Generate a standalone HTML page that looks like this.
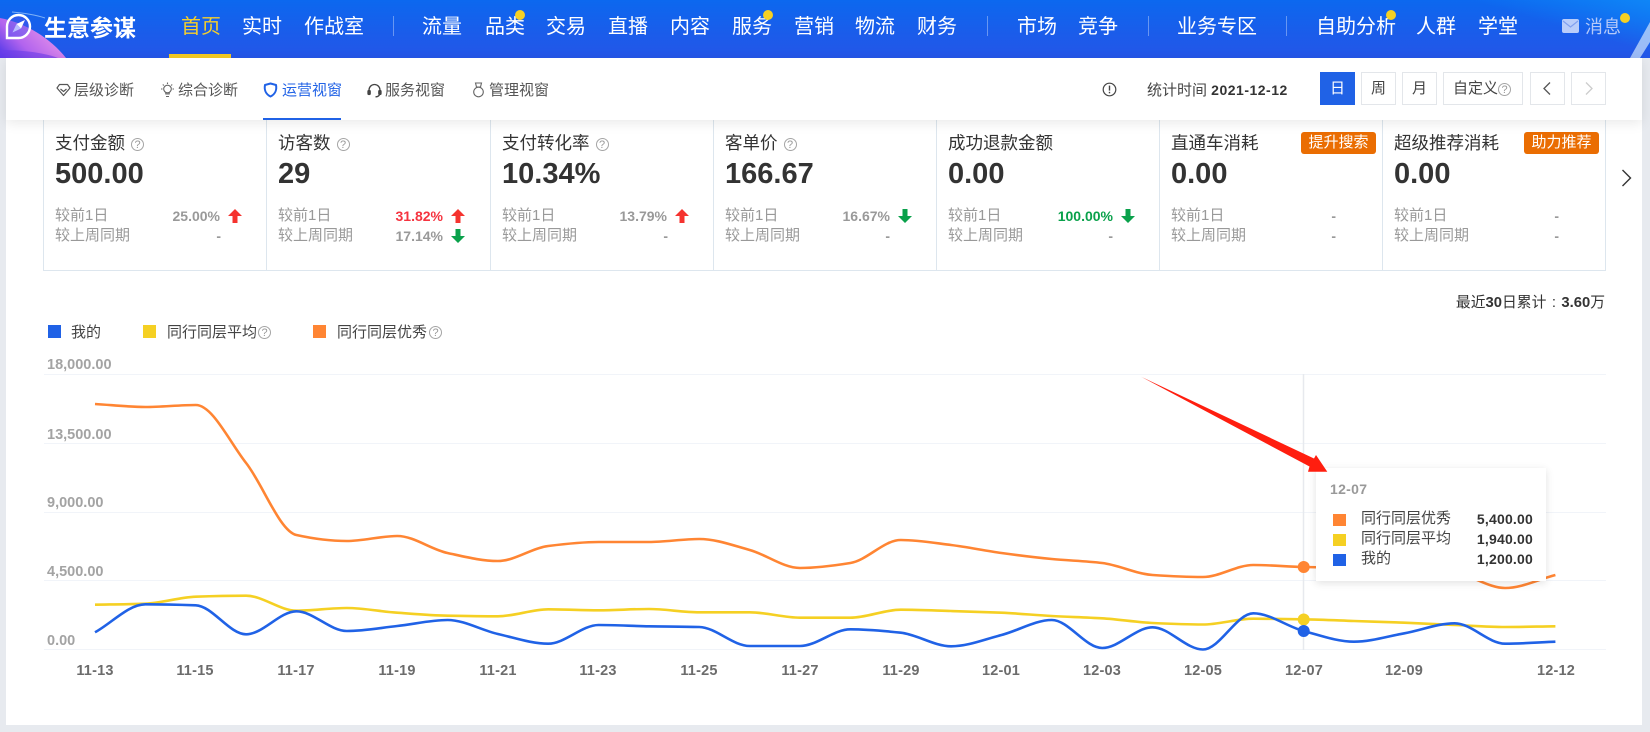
<!DOCTYPE html>
<html lang="zh">
<head>
<meta charset="utf-8">
<title>生意参谋</title>
<style>
*{box-sizing:border-box;margin:0;padding:0}
html,body{width:1650px;height:732px;overflow:hidden;background:#e7eaef}
body{position:relative;font-family:"Liberation Sans","Noto Sans CJK SC",sans-serif;color:#333}
.abs,.n,.s,.card,.btn,.dot,.sep{position:absolute}
#head{position:absolute;left:0;top:0;width:1650px;height:58px;background:linear-gradient(180deg,#0c68ef 0%,#1b5cea 60%,#2456e8 100%);overflow:hidden}
.n{top:0;line-height:54px;font-size:20px;color:#fff;white-space:nowrap}
.sep{top:16px;width:1px;height:20px;background:rgba(255,255,255,.35)}
.dot{width:10px;height:10px;border-radius:50%;background:#f5d023}
#main{position:absolute;left:6px;top:58px;width:1636px;height:667px;background:#fff}
#sub{position:absolute;left:6px;top:58px;width:1636px;height:62px;background:#fff;box-shadow:0 3px 12px rgba(0,0,0,.09);z-index:3}
.s{top:79px;line-height:24px;font-size:15px;color:#555;white-space:nowrap;z-index:4}
.ic{position:absolute;z-index:4}
.btn{top:72px;height:33px;border:1px solid #e3e6ea;background:#fff;font-size:15px;line-height:32px;text-align:center;color:#444;z-index:4}
.card{top:120px;width:224px;height:151px;border:1px solid #dde6ee;border-top:0}
.t{position:absolute;left:11px;top:11px;line-height:24px;font-size:17.5px;color:#333;white-space:nowrap}
.q{display:inline-block;width:13px;height:13px;border:1px solid #a5a5a5;border-radius:50%;font-size:11px;line-height:12px;text-align:center;color:#999;vertical-align:1px}
.t .q{margin-left:6px}
.v{position:absolute;left:11px;top:39px;line-height:30px;font-size:29px;font-weight:bold;color:#333}
.l{position:absolute;left:11px;line-height:20px;font-size:15px;color:#999;white-space:nowrap}
.r1{top:86px}.r2{top:106px}
.p{position:absolute;left:0;width:176px;text-align:right;line-height:20px;font-size:14px;font-weight:bold;color:#999}
.a{position:absolute;left:184px;width:14px;height:14px}
.tag{position:absolute;left:141px;top:12px;width:75px;height:22px;background:#ea6d02;color:#fff;border-radius:3px;font-size:15px;line-height:22px;text-align:center}
.lg{position:absolute;top:321px;line-height:24px;font-size:15px;color:#444;white-space:nowrap}
.sq{position:absolute;width:13px;height:13px}
.yl{position:absolute;left:47px;font-size:14.5px;line-height:18px;font-weight:bold;color:#a3a3a3}
.xl{position:absolute;top:662px;width:60px;text-align:center;font-size:14.5px;line-height:18px;font-weight:bold;letter-spacing:.2px;color:#6c6c6c}
#tip{position:absolute;left:1316px;top:468px;width:230px;height:113px;background:#fff;box-shadow:0 2px 8px rgba(0,0,0,.12)}
#tip .d{position:absolute;left:14px;top:12px;font-size:14px;line-height:18px;font-weight:bold;color:#999;letter-spacing:.3px}
#tip .k{position:absolute;left:45px;font-size:15px;line-height:20px;color:#444;white-space:nowrap}
#tip .m{position:absolute;right:13px;font-size:14px;line-height:20px;font-weight:bold;color:#333;letter-spacing:.2px}
#tip i{position:absolute;left:17px;width:13px;height:12px}
</style>
</head>
<body>
<div id="head">
<svg class="abs" style="left:0;top:0" width="1650" height="58" viewBox="0 0 1650 58">
<defs>
<linearGradient id="pk" x1="0" y1="1" x2="1" y2="0.4"><stop offset="0" stop-color="#4a35e8"/><stop offset=".4" stop-color="#b264ee"/><stop offset="1" stop-color="#f09ae8"/></linearGradient>
<linearGradient id="tr" x1="0" y1="1" x2="1" y2="0"><stop offset=".55" stop-color="#0f86f7" stop-opacity="0"/><stop offset="1" stop-color="#0f86f7"/></linearGradient>
</defs>
<rect x="1450" width="200" height="58" fill="url(#tr)"/>
<path d="M0 18C26 23 50 38 66 58H0Z" fill="url(#pk)"/>
<path d="M0 50C20 50 42 52 58 58H0Z" fill="#6c3cea" opacity=".6"/>
<path d="M12 12C24 13 36 15 45 18" stroke="#7fb2f7" stroke-width="1" fill="none"/>
<path d="M1650 22V42L1640 58H1630Z" fill="#c5dcfb" opacity=".75"/>
<path d="M7 38V26.500A11.500 11.500 0 1 1 18.500 38Z" fill="#4f52f0" fill-opacity=".45" stroke="#fff" stroke-width="2.400"/>
<path d="M25 20L21 28.500L16.500 24Z" fill="#fff"/>
<path d="M12.500 32.500L16.500 24L21 28.500Z" fill="#b9bcff"/>
</svg>
<span class="n" style="left:44px;top:1px;font-size:23px;font-weight:bold">生意参谋</span>
<span class="n" style="left:181px;color:#f5cf2b">首页</span>
<span class="n" style="left:242px">实时</span>
<span class="n" style="left:304px">作战室</span>
<span class="sep" style="left:393px"></span>
<span class="n" style="left:422px">流量</span>
<span class="n" style="left:485px">品类</span>
<span class="n" style="left:546px">交易</span>
<span class="n" style="left:608px">直播</span>
<span class="n" style="left:670px">内容</span>
<span class="n" style="left:732px">服务</span>
<span class="n" style="left:794px">营销</span>
<span class="n" style="left:855px">物流</span>
<span class="n" style="left:917px">财务</span>
<span class="sep" style="left:987px"></span>
<span class="n" style="left:1017px">市场</span>
<span class="n" style="left:1078px">竞争</span>
<span class="sep" style="left:1148px"></span>
<span class="n" style="left:1177px">业务专区</span>
<span class="sep" style="left:1286px"></span>
<span class="n" style="left:1316px">自助分析</span>
<span class="n" style="left:1416px">人群</span>
<span class="n" style="left:1478px">学堂</span>
<svg class="abs" style="left:1562px;top:19px" width="17" height="14" viewBox="0 0 17 14"><rect width="17" height="14" rx="2" fill="#b9cdfa"/><path d="M1 2L8.500 8L16 2" stroke="#7f9ff0" stroke-width="1.200" fill="none"/></svg>
<span class="n" style="left:1585px;font-size:18px;color:#b5c9f9">消息</span>
<span class="dot" style="left:515px;top:10px"></span>
<span class="dot" style="left:763px;top:10px"></span>
<span class="dot" style="left:1386px;top:10px"></span>
<span class="dot" style="left:1620px;top:13px"></span>
<span class="abs" style="left:169px;top:54px;width:62px;height:4px;background:#f5cb22"></span>
</div>

<div id="main"></div>
<div id="sub"></div>

<svg class="ic" style="left:56px;top:83px" width="15" height="14" viewBox="0 0 15 14" fill="none" stroke="#555" stroke-width="1.200"><path d="M3.500 1.500H11.500L14 5L7.500 12.500L1 5Z" stroke-linejoin="round"/><path d="M4.500 6L7.500 8.500L10.500 6"/></svg>
<span class="s" style="left:74px">层级诊断</span>
<svg class="ic" style="left:160px;top:82px" width="15" height="16" viewBox="0 0 15 16" fill="none" stroke="#666" stroke-width="1.100"><circle cx="7.500" cy="7" r="3.800"/><path d="M5.500 12H9.500M6 14.500H9M5.800 10.500V12.500M9.200 10.500V12.500M7.500 0.500V2M1 7H2.500M12.500 7H14M2.800 2.500L3.800 3.500M12.200 2.500L11.200 3.500"/></svg>
<span class="s" style="left:178px">综合诊断</span>
<svg class="ic" style="left:263px;top:82px" width="15" height="16" viewBox="0 0 15 16" fill="none" stroke="#2062e6" stroke-width="2"><path d="M7.500 1.500C9.500 2.200 11.500 2.500 13 3C13.900 7.500 12.500 12 7.500 14.500C2.500 12 1.100 7.500 2 3C3.500 2.500 5.500 2.200 7.500 1.500Z" stroke-linejoin="round"/></svg>
<span class="s" style="left:282px;color:#2062e6">运营视窗</span>
<svg class="ic" style="left:367px;top:83px" width="15" height="15" viewBox="0 0 15 15" fill="none" stroke="#444" stroke-width="1.300"><path d="M2 9V7A5.500 5.500 0 0 1 13 7V9"/><rect x="1" y="7.500" width="2.200" height="4" rx="1" fill="#444"/><rect x="11.800" y="7.500" width="2.200" height="4" rx="1" fill="#444"/><path d="M12.500 11.500C12 13 10.500 13.800 8.500 13.800"/></svg>
<span class="s" style="left:385px">服务视窗</span>
<svg class="ic" style="left:472px;top:82px" width="13" height="16" viewBox="0 0 13 16" fill="none" stroke="#666" stroke-width="1.100"><path d="M3.500 1H9.500L8.500 5H4.500Z"/><circle cx="6.500" cy="10" r="4.800"/></svg>
<span class="s" style="left:489px">管理视窗</span>
<span class="abs" style="left:263px;top:118px;width:78px;height:2px;background:#2062e6;z-index:4"></span>

<svg class="ic" style="left:1102px;top:82px" width="15" height="15" viewBox="0 0 15 15"><circle cx="7.500" cy="7.500" r="6.300" fill="none" stroke="#444" stroke-width="1.200"/><rect x="6.800" y="3.600" width="1.400" height="5" fill="#444"/><rect x="6.800" y="9.800" width="1.400" height="1.500" fill="#444"/></svg>
<span class="s" style="left:1147px;top:78px;color:#444">统计时间 <b style="font-size:14px;letter-spacing:.5px;color:#333">2021-12-12</b></span>
<span class="btn" style="left:1320px;width:35px;background:#2062e6;border-color:#2062e6;color:#fff">日</span>
<span class="btn" style="left:1361px;width:35px">周</span>
<span class="btn" style="left:1402px;width:35px">月</span>
<span class="btn" style="left:1443px;width:80px;text-align:left;padding-left:9px">自定义<span class="q" style="vertical-align:0;margin-left:0">?</span></span>
<span class="btn" style="left:1530px;width:35px"><svg width="10" height="15" viewBox="0 0 10 15" style="margin-top:8px;display:block;margin-left:11px"><path d="M8 1.500L2 7.500L8 13.500" fill="none" stroke="#555" stroke-width="1.300"/></svg></span>
<span class="btn" style="left:1571px;width:35px"><svg width="10" height="15" viewBox="0 0 10 15" style="margin-top:8px;display:block;margin-left:12px"><path d="M2 1.500L8 7.500L2 13.500" fill="none" stroke="#ccc" stroke-width="1.300"/></svg></span>

<div class="card" style="left:43px">
<div class="t">支付金额<span class="q">?</span></div><div class="v">500.00</div>
<div class="l r1">较前1日</div><div class="l r2">较上周同期</div>
<div class="p r1">25.00%</div><svg class="a" style="top:89px" viewBox="0 0 14 14"><path d="M7 0L14 7H9.500V14H4.500V7H0Z" fill="#f5332f"/></svg>
<div class="p r2" style="width:177px">-</div>
</div>
<div class="card" style="left:266px;width:225px">
<div class="t">访客数<span class="q">?</span></div><div class="v">29</div>
<div class="l r1">较前1日</div><div class="l r2">较上周同期</div>
<div class="p r1" style="color:#f5333f">31.82%</div><svg class="a" style="top:89px" viewBox="0 0 14 14"><path d="M7 0L14 7H9.500V14H4.500V7H0Z" fill="#f5332f"/></svg>
<div class="p r2">17.14%</div><svg class="a" style="top:109px" viewBox="0 0 14 14"><path d="M7 14L14 7H9.500V0H4.500V7H0Z" fill="#0aa14b"/></svg>
</div>
<div class="card" style="left:490px">
<div class="t">支付转化率<span class="q">?</span></div><div class="v">10.34%</div>
<div class="l r1">较前1日</div><div class="l r2">较上周同期</div>
<div class="p r1">13.79%</div><svg class="a" style="top:89px" viewBox="0 0 14 14"><path d="M7 0L14 7H9.500V14H4.500V7H0Z" fill="#f5332f"/></svg>
<div class="p r2" style="width:177px">-</div>
</div>
<div class="card" style="left:713px">
<div class="t">客单价<span class="q">?</span></div><div class="v">166.67</div>
<div class="l r1">较前1日</div><div class="l r2">较上周同期</div>
<div class="p r1">16.67%</div><svg class="a" style="top:89px" viewBox="0 0 14 14"><path d="M7 14L14 7H9.500V0H4.500V7H0Z" fill="#0aa14b"/></svg>
<div class="p r2" style="width:176px">-</div>
</div>
<div class="card" style="left:936px">
<div class="t">成功退款金额</div><div class="v">0.00</div>
<div class="l r1">较前1日</div><div class="l r2">较上周同期</div>
<div class="p r1" style="color:#0aa14b">100.00%</div><svg class="a" style="top:89px" viewBox="0 0 14 14"><path d="M7 14L14 7H9.500V0H4.500V7H0Z" fill="#0aa14b"/></svg>
<div class="p r2" style="width:176px">-</div>
</div>
<div class="card" style="left:1159px">
<div class="t">直通车消耗</div><div class="tag">提升搜索</div><div class="v">0.00</div>
<div class="l r1">较前1日</div><div class="l r2">较上周同期</div>
<div class="p r1" style="width:176px">-</div><div class="p r2" style="width:176px">-</div>
</div>
<div class="card" style="left:1382px">
<div class="t">超级推荐消耗</div><div class="tag">助力推荐</div><div class="v">0.00</div>
<div class="l r1">较前1日</div><div class="l r2">较上周同期</div>
<div class="p r1" style="width:176px">-</div><div class="p r2" style="width:176px">-</div>
</div>
<svg class="abs" style="left:1620px;top:168px" width="13" height="20" viewBox="0 0 13 20"><path d="M2.500 2L10.500 10L2.500 18" fill="none" stroke="#333" stroke-width="1.400"/></svg>

<div class="abs" style="right:45px;top:291px;line-height:24px;font-size:14.800px;color:#333;white-space:nowrap">最近<b>30</b>日累计<span style="display:inline-block;width:15px;text-align:center">:</span><b>3.60</b>万</div>

<span class="sq" style="left:48px;top:325px;background:#2062e6"></span>
<span class="lg" style="left:71px">我的</span>
<span class="sq" style="left:143px;top:325px;background:#f5d023"></span>
<span class="lg" style="left:167px">同行同层平均<span class="q" style="margin-left:1px">?</span></span>
<span class="sq" style="left:313px;top:325px;background:#ff8533"></span>
<span class="lg" style="left:337px">同行同层优秀<span class="q" style="margin-left:2px">?</span></span>

<svg class="abs" id="chart" style="left:0;top:0" width="1650" height="732" viewBox="0 0 1650 732">
<g stroke="#f1f4f9" stroke-width="1"><path d="M44 374.500H1606M44 443.500H1606M44 512.500H1606M44 580.500H1606M44 649.500H1606"/></g>
<path d="M1303.500 374V650" stroke="#e7e9ee" stroke-width="1.500"/>
<path id="po" fill="none" stroke="#ff8533" stroke-width="2.600" stroke-linejoin="round"/>
<path id="py" fill="none" stroke="#f5d023" stroke-width="2.600" stroke-linejoin="round"/>
<path id="pb" fill="none" stroke="#2062e6" stroke-width="2.600" stroke-linejoin="round"/>
<circle cx="1303.700" cy="567" r="6" fill="#ff8533"/>
<circle cx="1303.700" cy="619.500" r="6" fill="#f5d023"/>
<circle cx="1303.700" cy="631" r="6" fill="#2062e6"/>
</svg>

<span class="yl" style="top:356px">18,000.00</span>
<span class="yl" style="top:426px">13,500.00</span>
<span class="yl" style="top:494px">9,000.00</span>
<span class="yl" style="top:563px">4,500.00</span>
<span class="yl" style="top:632px">0.00</span>

<span class="xl" style="left:65px">11-13</span>
<span class="xl" style="left:165px">11-15</span>
<span class="xl" style="left:266px">11-17</span>
<span class="xl" style="left:367px">11-19</span>
<span class="xl" style="left:468px">11-21</span>
<span class="xl" style="left:568px">11-23</span>
<span class="xl" style="left:669px">11-25</span>
<span class="xl" style="left:770px">11-27</span>
<span class="xl" style="left:871px">11-29</span>
<span class="xl" style="left:971px">12-01</span>
<span class="xl" style="left:1072px">12-03</span>
<span class="xl" style="left:1173px">12-05</span>
<span class="xl" style="left:1274px">12-07</span>
<span class="xl" style="left:1374px">12-09</span>
<span class="xl" style="left:1526px">12-12</span>

<div id="tip">
<div class="d">12-07</div>
<i style="top:46px;background:#ff8533"></i><span class="k" style="top:41px">同行同层优秀</span><span class="m" style="top:41px">5,400.00</span>
<i style="top:66px;background:#f5d023"></i><span class="k" style="top:61px">同行同层平均</span><span class="m" style="top:61px">1,940.00</span>
<i style="top:86px;background:#2062e6"></i><span class="k" style="top:81px">我的</span><span class="m" style="top:81px">1,200.00</span>
</div>

<svg class="abs" style="left:0;top:0" width="1650" height="732" viewBox="0 0 1650 732">
<path d="M1141 376.700L1314 458.500L1316 455L1327.300 471.700H1308L1309.500 466.500Z" fill="#ff1e0f"/>
</svg>

<script>
(function(){
var o=[404,407,405,463,535,541,536,553,561,546,542,542,539,550,568,563,540,545,553,559,563,575,577,565,567,568,570,573,588,575];
var y=[604.7,603.7,596.7,595.7,610.7,608,612.7,615.7,616.3,609.3,610.3,609,612.3,612.3,617.7,617.7,609.7,611,612.7,616,618.3,623,624.5,618.7,619.3,621,622.7,625,627,626.3];
var b=[632.3,604.3,605.3,634.3,611.3,631,626,620,634,643.7,625,626.3,627,646,646,629.3,632.7,646.3,635,620,648,627.3,649.5,613.3,631,641.7,633.3,623.3,643.7,641.7];
function build(a){
  var h=50.36,x0=95,n=a.length,s=[],m=[],i,d;
  for(i=0;i<n-1;i++)s[i]=(a[i+1]-a[i])/h;
  m[0]=s[0];m[n-1]=s[n-2];
  for(i=1;i<n-1;i++){m[i]=s[i-1]*s[i]<=0?0:2*s[i-1]*s[i]/(s[i-1]+s[i]);}
  d='M'+x0+' '+a[0];
  for(i=0;i<n-1;i++){
    var xa=x0+i*h,xb=xa+h;
    d+='C'+(xa+h/3).toFixed(1)+' '+(a[i]+m[i]*h/3).toFixed(1)+' '+(xb-h/3).toFixed(1)+' '+(a[i+1]-m[i+1]*h/3).toFixed(1)+' '+xb.toFixed(1)+' '+a[i+1];
  }
  return d;
}
document.getElementById('po').setAttribute('d',build(o));
document.getElementById('py').setAttribute('d',build(y));
document.getElementById('pb').setAttribute('d',build(b));
})();
</script>
</body>
</html>
